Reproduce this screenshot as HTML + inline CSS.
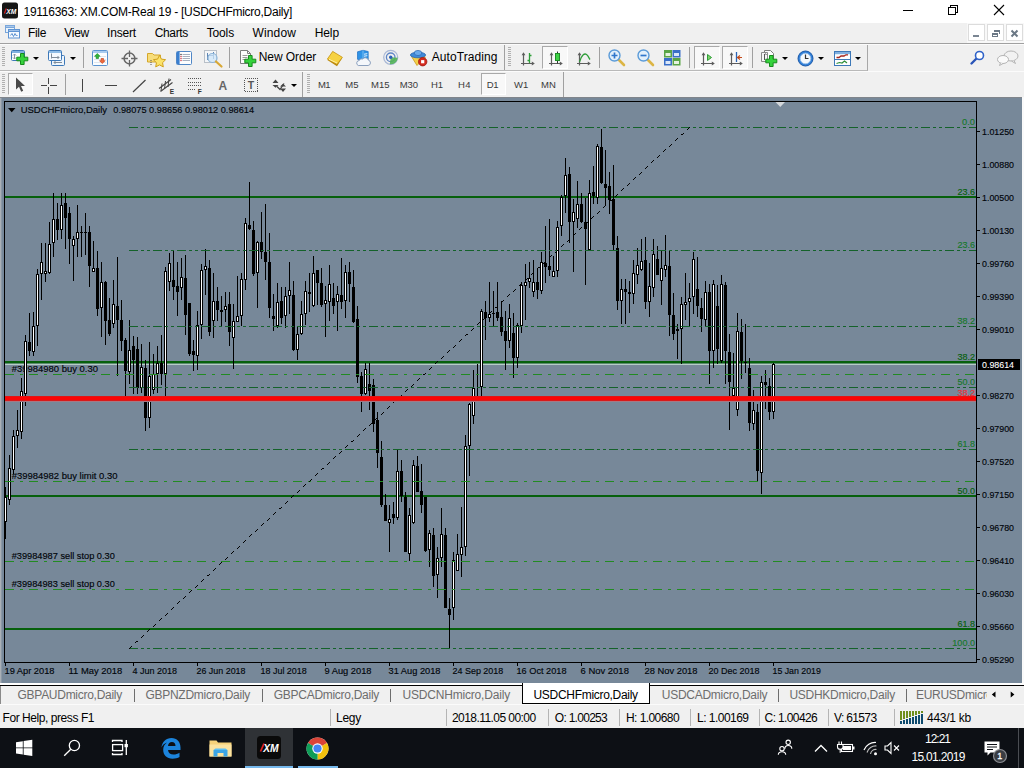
<!DOCTYPE html>
<html lang="en"><head><meta charset="utf-8"><title>19116363: XM.COM-Real 19 - [USDCHFmicro,Daily]</title>
<style>
html,body{margin:0;padding:0}
body{width:1024px;height:768px;overflow:hidden;position:relative;background:#f0f0f0;font-family:"Liberation Sans",sans-serif}
.t{position:absolute;white-space:pre;line-height:20px;height:20px;font-family:"Liberation Sans",sans-serif}
.abs{position:absolute}
#titlebar{position:absolute;left:0;top:0;width:1024px;height:23px;background:#fff}
#menubar{position:absolute;left:0;top:23px;width:1024px;height:20px;background:#f0f0f0;border-bottom:1px solid #a0a0a0}
#tb1{position:absolute;left:0;top:44px;width:1024px;height:27px}
#tb2{position:absolute;left:0;top:71px;width:1024px;height:26px}
.sep{position:absolute;width:1px;background:#a0a0a0}
.grip{position:absolute;width:3px;height:20px;background:repeating-linear-gradient(to bottom,#b0b0b0 0,#b0b0b0 1px,transparent 1px,transparent 2px)}
.pressed{position:absolute;background:#f8f8f8;border:1px solid #fff;border-top-color:#a9a9a9;border-left-color:#a9a9a9;box-sizing:border-box}
.dd{position:absolute;width:0;height:0;border-left:3px solid transparent;border-right:3px solid transparent;border-top:3px solid #000}
#mdi{position:absolute;left:0;top:97px;width:1024px;height:586px;background:#778899;overflow:hidden}
#tabs{position:absolute;left:0;top:683px;width:1024px;height:22px;background:#f0f0f0}
#status{position:absolute;left:0;top:705px;width:1024px;height:23px;background:#f0f0f0}
#taskbar{position:absolute;left:0;top:728px;width:1024px;height:40px;background:#0d1015}
svg{position:absolute;display:block;overflow:visible}
svg text{font-family:"Liberation Sans",sans-serif}
</style></head><body>
<div id="titlebar"><svg style="left:2px;top:2px" width="16" height="17" viewBox="0 0 16 17"><rect x="0" y="0.5" width="16" height="16" rx="2.5" fill="#161616"/><path d="M2.400 11.500L4.300 6.500" stroke="#d42020" stroke-width="1.200"/><text x="4.200" y="11.600" font-size="6.800" font-weight="bold" font-style="italic" fill="#fff" textLength="10" lengthAdjust="spacingAndGlyphs">XM</text></svg><span class="t" style="left:23.5px;top:2px;font-size:12px;color:#000;letter-spacing:-0.261px;">19116363: XM.COM-Real 19 - [USDCHFmicro,Daily]</span><svg style="left:896px;top:0" width="128" height="23" viewBox="0 0 128 23" shape-rendering="crispEdges"><path d="M7 10.5 H17" stroke="#000" stroke-width="1"/><path d="M52.5 7.5 H59.5 V14.5 H52.5 Z M54.5 7.5 V5.5 H61.5 V12.5 H59.5" stroke="#000" fill="none"/><path d="M98 5 L108 15 M108 5 L98 15" stroke="#000" stroke-width="1.1" shape-rendering="geometricPrecision"/></svg></div><div id="menubar"></div><svg style="left:5px;top:25px" width="16" height="14" viewBox="0 0 16 14"><rect x="0.500" y="0.500" width="9" height="7" fill="#eaf3fc" stroke="#7aa6da"/><rect x="0.500" y="0.500" width="9" height="2" fill="#a8c8ec" stroke="#7aa6da"/><rect x="3.500" y="4.500" width="11" height="8.500" fill="#f4f9ff" stroke="#5e93d2"/><rect x="3.500" y="4.500" width="11" height="2" fill="#9cc0ea" stroke="#5e93d2"/><path d="M5.500 10.500l1.500-2 1.500 3 1.500-3 1.500 2.500 1-1" stroke="#4a86cc" fill="none" stroke-width=".9"/></svg><span class="t" style="left:28px;top:23px;font-size:12px;color:#000;letter-spacing:-0.336px;">File</span><span class="t" style="left:64.3px;top:23px;font-size:12px;color:#000;letter-spacing:-0.274px;">View</span><span class="t" style="left:107px;top:23px;font-size:12px;color:#000;letter-spacing:-0.167px;">Insert</span><span class="t" style="left:154.7px;top:23px;font-size:12px;color:#000;letter-spacing:-0.341px;">Charts</span><span class="t" style="left:206.7px;top:23px;font-size:12px;color:#000;letter-spacing:-0.143px;">Tools</span><span class="t" style="left:252.5px;top:23px;font-size:12px;color:#000;letter-spacing:0.135px;">Window</span><span class="t" style="left:314.7px;top:23px;font-size:12px;color:#000;letter-spacing:-0.097px;">Help</span><div class="abs" style="left:967px;top:23px;width:57px;height:20px;background:#f8f8f8"></div><div class="abs" style="left:968px;top:24px;width:17px;height:17px;background:#fff;border:1px solid #dcdcdc;box-sizing:border-box"></div><div class="abs" style="left:987px;top:24px;width:17px;height:17px;background:#fff;border:1px solid #dcdcdc;box-sizing:border-box"></div><div class="abs" style="left:1006px;top:24px;width:17px;height:17px;background:#fff;border:1px solid #dcdcdc;box-sizing:border-box"></div><svg style="left:968px;top:24px" width="56" height="18" viewBox="0 0 56 18" shape-rendering="crispEdges"><rect x="5" y="11" width="6" height="2" fill="#7a8592"/><path d="M26.5 6.5 H31.5 V9.5 M24.5 9.5 H29.5 V12.5 H24.5 Z" stroke="#6b7885" fill="none" stroke-width="1"/><rect x="26" y="6" width="6" height="2" fill="#6b7885"/><rect x="24" y="9" width="6" height="2" fill="#6b7885"/><path d="M43.5 6.5 L49.5 12.5 M49.5 6.5 L43.5 12.5" stroke="#6b7885" stroke-width="2" shape-rendering="geometricPrecision"/></svg><div class="abs" style="left:0;top:44px;width:867px;height:26px;border-bottom:1px solid #b9b9b9;border-right:1px solid #a8a8a8;box-sizing:content-box"></div><div class="abs" style="left:0;top:44px;width:1024px;height:1px;background:#fbfbfb"></div><div class="abs" style="left:0;top:71px;width:1024px;height:1px;background:#fbfbfb"></div><div class="grip" style="left:2px;top:47px"></div><div class="grip" style="left:508px;top:47px"></div><div class="grip" style="left:2px;top:74px"></div><div class="grip" style="left:307px;top:74px"></div><svg style="left:11px;top:50px" width="18" height="16" viewBox="0 0 18 16" ><rect x="0.5" y="0.5" width="13" height="10" rx="1" fill="#fdfeff" stroke="#3d78b8"/><rect x="1" y="1" width="12" height="2" fill="#7fb0e0"/><path d="M3.5 4v5M2 5.5l1.5-1.5 1.5 1.5M2 7.5l1.5 1.5 1.5-1.5" stroke="#8a96a3" fill="none" stroke-width="1"/><path d="M9.5 3.5h3.600v3.700h3.700v3.600h-3.700v3.700h-3.600v-3.700h-3.700v-3.600h3.700z" fill="#35d23c" stroke="#168a1c" stroke-width="1"/></svg><div class="dd" style="left:33px;top:57px"></div><svg style="left:48px;top:50px" width="18" height="16" viewBox="0 0 18 16" ><rect x="3.5" y="5.5" width="13" height="10" rx="1" fill="#eef5fc" stroke="#3d78b8"/><rect x="0.5" y="0.5" width="13" height="10" rx="1" fill="#f4f9ff" stroke="#3d78b8"/><rect x="1" y="1" width="12" height="2" fill="#8dbbe6"/><path d="M3.5 3.5v5M3 7.5h8M9.5 6l1.5 1.5-1.5 1.5M6 12.5h8M7.5 11l-1.5 1.5 1.5 1.5" stroke="#7f8c9a" fill="none"/></svg><div class="dd" style="left:70px;top:57px"></div><div class="sep" style="left:83px;top:47px;height:21px"></div><svg style="left:92px;top:50px" width="17" height="16" viewBox="0 0 17 16" ><rect x="0.5" y="0.5" width="15" height="15" rx="1" fill="#fbfdff" stroke="#5b93d0"/><rect x="1" y="1" width="14" height="2" fill="#a9cbee"/><path d="M2 6.5h12M2 9.5h12M2 12.5h12" stroke="#dfe6ee"/><path d="M5.3 3.5l2.800 2.800h-1.600v2.200h-2.400v-2.200h-1.600z" fill="#2fb53a" stroke="#178a22" stroke-width=".6"/><path d="M10.300 13.500l-2.800-2.800h1.600v-2.200h2.400v2.200h1.600z" fill="#f06a3c" stroke="#c23a12" stroke-width=".6"/></svg><svg style="left:121px;top:50px" width="17" height="17" viewBox="0 0 17 17" ><circle cx="8.5" cy="8.5" r="5.400" fill="none" stroke="#666" stroke-width="1.5"/><path d="M8.5 0.5v6.500M8.5 10v6.500M0.5 8.5h6.500M10 8.5h6.500" stroke="#666" stroke-width="1.300"/></svg><svg style="left:147px;top:50px" width="20" height="17" viewBox="0 0 20 17" ><path d="M0.5 3.5h5l1.5 1.5h6.5v7h-13z" fill="#f7dd7a" stroke="#d4a72c"/><path d="M4 10v6" stroke="#555" stroke-dasharray="1 1"/><path d="M12.5 5.2l1.9 3.9 4.2.6-3.05 3 .75 4.2-3.8-2-3.8 2 .75-4.2-3.05-3 4.2-.6z" fill="#fbe36a" stroke="#d1a11e" stroke-width="1"/></svg><svg style="left:176px;top:50px" width="17" height="16" viewBox="0 0 17 16" ><rect x="0.5" y="1.5" width="15" height="13" rx="1" fill="#fdfeff" stroke="#4f86c6"/><rect x="1" y="2" width="2.600" height="12" fill="#3a7fd0"/><path d="M6.5 4.5h7.500M6.5 6.5h7.500M6.5 8.5h7.500M6.5 10.500h7.500" stroke="#8f9cae" stroke-width=".8"/><circle cx="5" cy="4.5" r=".7" fill="#222"/><circle cx="5" cy="6.5" r=".7" fill="#c23"/><circle cx="5" cy="8.5" r=".7" fill="#c23"/><circle cx="5" cy="10.500" r=".7" fill="#c23"/></svg><svg style="left:204px;top:50px" width="19" height="18" viewBox="0 0 19 18" ><rect x="0.5" y="0.5" width="12" height="12" fill="#f4f6f8" stroke="#b9c0c8"/><path d="M3.5 3v7M9.5 2v7M3.5 5.5h6" stroke="#5f86b3"/><circle cx="8.5" cy="8" r="4.5" fill="#cfe6fa" fill-opacity=".75" stroke="#8db4d8" stroke-width="1.2"/><path d="M12 11.5l5.5 5" stroke="#d9a835" stroke-width="2.2" stroke-linecap="round"/></svg><div class="sep" style="left:229px;top:47px;height:21px"></div><svg style="left:239px;top:50px" width="18" height="18" viewBox="0 0 18 18" ><path d="M1.5 0.5h7l3 3v10h-10z" fill="#fcfcfc" stroke="#7d7d7d"/><path d="M8.5 0.5v3h3" fill="none" stroke="#7d7d7d"/><path d="M3.5 5.5h5M3.5 7.5h5M3.5 9.5h3" stroke="#9a9a9a"/><path d="M9.5 5.5h3.600v3.700h3.700v3.600h-3.700v3.700h-3.600v-3.700h-3.700v-3.600h3.700z" fill="#35d23c" stroke="#168a1c" stroke-width="1"/></svg><span class="t" style="left:258.7px;top:47px;font-size:12px;color:#000;letter-spacing:-0.057px;">New Order</span><svg style="left:326px;top:50px" width="18" height="17" viewBox="0 0 18 17" ><path d="M1.400 10L6.700 1.400L16.400 7.800L11 16.300z" fill="#b8860b"/><path d="M1.400 9L6.700 1.400L16.400 7.300L11 14.300z" fill="#f6d242" stroke="#c9981a" stroke-width=".8"/><path d="M3 9.300L11 13" stroke="#fff0a8" stroke-width="1"/></svg><svg style="left:355px;top:50px" width="17" height="17" viewBox="0 0 17 17" ><path d="M2.500 1.800L8 0.300l5.200 1.200v8L8 10.500l-5.500-1.200z" fill="#2f93e6" stroke="#1c6fc4" stroke-width=".7"/><path d="M8 0.300v10" stroke="#8ac6f5" stroke-width=".8"/><path d="M9 4.200l3.300-.5M9 6.200l3.300-.5" stroke="#e8f4ff" stroke-width="1"/><path d="M3.300 15.500h9.800a2.700 2.700 0 0 0 .3-5.300a3.300 3.300 0 0 0-5.800-1.200a2.500 2.500 0 0 0-3.300 1.500a2.600 2.600 0 0 0-1 5z" fill="#f4f7fb" stroke="#7f96b8" stroke-width=".9"/></svg><svg style="left:383px;top:50px" width="17" height="17" viewBox="0 0 17 17" ><circle cx="7.700" cy="7.300" r="7" fill="none" stroke="#aab9d6" stroke-width="1.300"/><circle cx="7.700" cy="7.300" r="4.300" fill="none" stroke="#5f86c6" stroke-width="1.300"/><path d="M7.700 7.300L14.700 7.800A7 7 0 0 1 6.800 14.300z" fill="#52b257" fill-opacity=".9"/><circle cx="7.700" cy="7.300" r="1.700" fill="#2b62b6"/></svg><svg style="left:410px;top:49px" width="18" height="18" viewBox="0 0 18 18" ><path d="M1.500 7.500L7 16.500L15.500 8z" fill="#f4d04a" stroke="#c9981a" stroke-width=".8"/><ellipse cx="8" cy="6" rx="7.600" ry="2.800" fill="#3f8ad8" stroke="#2a66b0" stroke-width=".8"/><ellipse cx="8" cy="4" rx="3.800" ry="2.600" fill="#6aa9ea" stroke="#2a66b0" stroke-width=".7"/><circle cx="12.700" cy="12.700" r="4.200" fill="#d42a1e" stroke="#9c1610" stroke-width=".8"/><rect x="11.100" y="11.100" width="3.200" height="3.200" fill="#fff"/></svg><span class="t" style="left:431.7px;top:47px;font-size:12px;color:#000;letter-spacing:0.080px;">AutoTrading</span><div class="sep" style="left:504px;top:45px;height:25px"></div><svg style="left:520px;top:51px" width="16" height="16" viewBox="0 0 16 16" ><path d="M3.500 2.500v12M1 12.500h12.500" stroke="#5c5c5c" stroke-width="1.200" fill="none"/><path d="M1.600 4.200l1.900-3 1.900 3zM11.800 10.600l3 1.900-3 1.900z" fill="#5c5c5c"/><path d="M9.500 2v10M7.500 9.500h2M9.500 4.500h2" stroke="#2e9e38" stroke-width="1.300" fill="none"/></svg><div class="pressed" style="left:542px;top:46px;width:26px;height:23px"></div><svg style="left:548px;top:51px" width="16" height="16" viewBox="0 0 16 16" ><path d="M3.500 2.500v12M1 12.500h12.500" stroke="#5c5c5c" stroke-width="1.200" fill="none"/><path d="M1.600 4.200l1.900-3 1.900 3zM11.800 10.600l3 1.900-3 1.900z" fill="#5c5c5c"/><path d="M9.500 0.500v12" stroke="#333"/><rect x="7.500" y="2.500" width="4" height="7" fill="#3fd246" stroke="#1f8f28"/></svg><svg style="left:576px;top:51px" width="16" height="16" viewBox="0 0 16 16" ><path d="M3.500 2.500v12M1 12.500h12.500" stroke="#5c5c5c" stroke-width="1.200" fill="none"/><path d="M1.600 4.200l1.900-3 1.900 3zM11.800 10.600l3 1.900-3 1.900z" fill="#5c5c5c"/><path d="M3.500 11c2-7 5-9 7-7.500s2 3 3.500 5" stroke="#2e9e38" stroke-width="1.300" fill="none"/></svg><div class="sep" style="left:599px;top:47px;height:21px"></div><svg style="left:608px;top:49px" width="18" height="18" viewBox="0 0 18 18" ><path d="M10.500 10.500l5.500 5.500" stroke="#dcb545" stroke-width="2.600" stroke-linecap="round"/><circle cx="6.500" cy="6.500" r="5.500" fill="#e2f0fb" stroke="#5b9bd8" stroke-width="1.400"/><path d="M3.500 6.500h6M6.500 3.500v6" stroke="#2f77cc" stroke-width="1.700"/></svg><svg style="left:637px;top:49px" width="18" height="18" viewBox="0 0 18 18" ><path d="M10.500 10.500l5.500 5.500" stroke="#dcb545" stroke-width="2.600" stroke-linecap="round"/><circle cx="6.500" cy="6.500" r="5.500" fill="#e2f0fb" stroke="#5b9bd8" stroke-width="1.400"/><path d="M3.500 6.500h6" stroke="#2f77cc" stroke-width="1.700"/></svg><svg style="left:664px;top:50px" width="17" height="16" viewBox="0 0 17 16" ><rect x="0" y="0" width="8" height="7.500" fill="#5aa546"/><rect x="8.500" y="0" width="8" height="7.500" fill="#3a6fc8"/><rect x="0" y="8" width="8" height="7.500" fill="#3a6fc8"/><rect x="8.500" y="8" width="8" height="7.500" fill="#5aa546"/><rect x="1.500" y="3" width="5" height="3" fill="#e6f2df"/><rect x="10" y="3" width="5" height="3" fill="#dbe7f8"/><rect x="1.500" y="11" width="5" height="3" fill="#dbe7f8"/><rect x="10" y="11" width="5" height="3" fill="#e6f2df"/></svg><div class="sep" style="left:689px;top:47px;height:21px"></div><div class="pressed" style="left:694px;top:46px;width:26px;height:23px"></div><svg style="left:700px;top:51px" width="16" height="16" viewBox="0 0 16 16" ><path d="M3.500 2.500v12M1 12.500h12.500" stroke="#5c5c5c" stroke-width="1.200" fill="none"/><path d="M1.600 4.200l1.900-3 1.900 3zM11.800 10.600l3 1.900-3 1.900z" fill="#5c5c5c"/><path d="M7.500 3.500l4 3-4 3z" fill="#7fd36a" stroke="#2e9e38"/></svg><div class="pressed" style="left:722px;top:46px;width:26px;height:23px"></div><svg style="left:728px;top:51px" width="16" height="16" viewBox="0 0 16 16" ><path d="M3.500 2.500v12M1 12.500h12.500" stroke="#5c5c5c" stroke-width="1.200" fill="none"/><path d="M1.600 4.200l1.900-3 1.900 3zM11.800 10.600l3 1.900-3 1.900z" fill="#5c5c5c"/><path d="M8.500 1v10" stroke="#2a63b5" stroke-width="1.300"/><path d="M14 6.500h-4M12 4.500l-2.500 2 2.500 2" stroke="#c24a1a" fill="none" stroke-width="1.200"/></svg><div class="sep" style="left:752px;top:47px;height:21px"></div><svg style="left:761px;top:50px" width="18" height="18" viewBox="0 0 18 18" ><path d="M3.500 0.500h6l3 3v8h-9z" fill="#fcfcfc" stroke="#7d7d7d"/><path d="M0.500 2.500h6v9h-6z" fill="#f6f6f6" stroke="#8a8a8a"/><path d="M3 5c1.500-2 2-1 2.500 0" stroke="#555" fill="none"/><path d="M3.500 4v6" stroke="#555"/><path d="M8.5 5.5h3.600v3.700h3.700v3.600h-3.700v3.700h-3.600v-3.700h-3.700v-3.600h3.700z" fill="#35d23c" stroke="#168a1c" stroke-width="1"/></svg><div class="dd" style="left:782px;top:57px"></div><svg style="left:797px;top:50px" width="17" height="17" viewBox="0 0 17 17" ><circle cx="8.500" cy="8.500" r="7.500" fill="#2f7fd8" stroke="#1b58a8"/><circle cx="8.500" cy="8.500" r="5.300" fill="#f4f8fc" stroke="#9cc0ea" stroke-width=".8"/><path d="M8.500 4.500v4h3" stroke="#333" fill="none" stroke-width="1.200"/></svg><div class="dd" style="left:818px;top:57px"></div><svg style="left:834px;top:51px" width="17" height="15" viewBox="0 0 17 15" ><rect x="0.500" y="0.500" width="16" height="14" fill="#fdfeff" stroke="#3d78b8"/><rect x="1" y="1" width="15" height="2.200" fill="#7fb0e0"/><path d="M1 8.500h15" stroke="#3d78b8"/><path d="M2.500 6.500h2.500l2-1.500h3l2-1.200h2" stroke="#a5251b" fill="none" stroke-width="1.300"/><path d="M2.500 12.500l3-1 2.500.5 2.500-2 2.500 2" stroke="#2e8e38" fill="none" stroke-width="1.200"/></svg><div class="dd" style="left:855px;top:57px"></div><svg style="left:970px;top:50px" width="15" height="15" viewBox="0 0 15 15" ><path d="M1.500 13.500l4.500-4.500" stroke="#2a55b8" stroke-width="2.400" stroke-linecap="round"/><circle cx="9.500" cy="5.500" r="4" fill="#fff" stroke="#2f62c8" stroke-width="1.600"/></svg><svg style="left:997px;top:50px" width="22" height="16" viewBox="0 0 22 16" ><ellipse cx="14" cy="6" rx="7" ry="5" fill="#f2f2f2" stroke="#b4b4b4"/><path d="M17 10.500l1.500 3-4-2.500" fill="#f2f2f2" stroke="#b4b4b4"/><ellipse cx="6" cy="9.500" rx="5.500" ry="4" fill="#fafafa" stroke="#b4b4b4"/><path d="M3.500 12.800l-1 2.700 3.500-2" fill="#fafafa" stroke="#b4b4b4"/></svg><div class="pressed" style="left:8px;top:73px;width:25px;height:22px"></div><svg style="left:15px;top:77px" width="11" height="16" viewBox="0 0 11 16" ><path d="M1 0.500v12l3-2.800 2.200 5 2-1-2.200-4.700h4z" fill="#4a4a4a"/></svg><svg style="left:41px;top:78px" width="16" height="16" viewBox="0 0 16 16" shape-rendering="crispEdges"><path d="M7.500 0v6M7.500 9v6.500M0 7.500h6M9 7.500h6.500" stroke="#444" stroke-width="1.200"/></svg><div class="sep" style="left:65px;top:74px;height:21px"></div><div class="abs" style="left:82px;top:79px;width:1px;height:13px;background:#444"></div><div class="abs" style="left:105px;top:85px;width:12px;height:1px;background:#444"></div><svg style="left:132px;top:79px" width="14" height="14" viewBox="0 0 14 14" ><path d="M1 13L13.500 1" stroke="#444" stroke-width="1.200"/></svg><svg style="left:158px;top:77px" width="17" height="17" viewBox="0 0 17 17" ><path d="M1 11.500L13 2.500M2.500 14.500L14.500 5.500" stroke="#444" stroke-width="1.100"/><path d="M4 6.500L3 14M7.500 4L6.500 12M11 1.500L10 10" stroke="#444" stroke-width="1"/><text x="11.800" y="16.600" font-size="6.500" font-weight="bold" fill="#333">E</text></svg><svg style="left:188px;top:77px" width="15" height="17" viewBox="0 0 15 17" shape-rendering="crispEdges"><path d="M0 1.500h13M0 5.500h13M0 8.500h13M0 12.500h8" stroke="#555" stroke-dasharray="1 1"/><text x="9.800" y="16.800" font-size="6.500" font-weight="bold" fill="#333" shape-rendering="geometricPrecision">F</text></svg><span class="t" style="left:218.500px;top:76px;font-size:12px;font-weight:bold;color:#666">A</span><svg style="left:244px;top:78px" width="14" height="14" viewBox="0 0 14 14" shape-rendering="crispEdges"><rect x="0.500" y="0.500" width="13" height="13" fill="none" stroke="#555" stroke-dasharray="1 1"/><text x="7" y="11.300" font-size="10.500" font-weight="bold" fill="#555" text-anchor="middle">T</text></svg><svg style="left:272px;top:79px" width="15" height="14" viewBox="0 0 15 14" ><path d="M3.500 0.500l3 3.500h-6zM11 13l3-3.500h-6z" fill="#444"/><path d="M0.500 6h6l-3 2.800zM8 7.500h6l-3-2.800z" fill="#444"/><path d="M5 7.500l3 3 4-6" stroke="#444" fill="none" stroke-width="1.300"/></svg><div class="dd" style="left:291px;top:84px"></div><div class="sep" style="left:302px;top:72px;height:25px"></div><span class="t" style="left:318px;top:75.3px;font-size:9.5px;color:#3a3a3a;letter-spacing:-0.594px;">M1</span><span class="t" style="left:345.3px;top:75.3px;font-size:9.5px;color:#3a3a3a;letter-spacing:0.006px;">M5</span><span class="t" style="left:371px;top:75.3px;font-size:9.5px;color:#3a3a3a;letter-spacing:0.010px;">M15</span><span class="t" style="left:399.7px;top:75.3px;font-size:9.5px;color:#3a3a3a;letter-spacing:-0.056px;">M30</span><span class="t" style="left:431px;top:75.3px;font-size:9.5px;color:#3a3a3a;letter-spacing:-0.070px;">H1</span><span class="t" style="left:458px;top:75.3px;font-size:9.5px;color:#3a3a3a;letter-spacing:0.430px;">H4</span><div class="pressed" style="left:481px;top:73px;width:25px;height:22px"></div><span class="t" style="left:486.7px;top:75.3px;font-size:9.5px;color:#3a3a3a;letter-spacing:-0.420px;">D1</span><span class="t" style="left:514px;top:75.3px;font-size:9.5px;color:#3a3a3a;letter-spacing:0.125px;">W1</span><span class="t" style="left:541px;top:75.3px;font-size:9.5px;color:#3a3a3a;letter-spacing:0.117px;">MN</span><div class="sep" style="left:563px;top:72px;height:25px"></div><div id="mdi"><svg style="left:0;top:0" width="1024" height="587" viewBox="0 97 1024 587" shape-rendering="crispEdges"><rect x="0" y="97" width="1024" height="1" fill="#80858b"/><rect x="0" y="98" width="1" height="586" fill="#aab0b6"/><rect x="1" y="98" width="1" height="586" fill="#8c99a6"/><rect x="1022" y="97" width="2" height="587" fill="#fafafa"/><clipPath id="cc"><rect x="5" y="102" width="971" height="560"/></clipPath><g clip-path="url(#cc)"><rect x="5" y="196" width="971" height="2" fill="#06600c"/><rect x="5" y="361" width="971" height="2" fill="#06600c"/><rect x="5" y="495" width="971" height="2" fill="#06600c"/><rect x="5" y="628" width="971" height="2" fill="#06600c"/><rect x="5" y="363" width="971" height="1" fill="#5a8a6c"/><rect x="5" y="364" width="971" height="1" fill="#b6ccc6"/><g shape-rendering="geometricPrecision" stroke-width="0.150"><text x="11.7" y="371.8" font-size="9.5" fill="#000409" stroke="#000409" text-anchor="start" textLength="86.3" lengthAdjust="spacingAndGlyphs">#39984980 buy 0.30</text><text x="11.7" y="478.8" font-size="9.5" fill="#000409" stroke="#000409" text-anchor="start" textLength="105.8" lengthAdjust="spacingAndGlyphs">#39984982 buy limit 0.30</text><text x="11.7" y="559" font-size="9.5" fill="#000409" stroke="#000409" text-anchor="start" textLength="103.1" lengthAdjust="spacingAndGlyphs">#39984987 sell stop 0.30</text><text x="11.7" y="587.2" font-size="9.5" fill="#000409" stroke="#000409" text-anchor="start" textLength="103.1" lengthAdjust="spacingAndGlyphs">#39984983 sell stop 0.30</text></g><path d="M5 487h1v52h-1zM4 497h3v25h-3zM9 455h1v50h-1zM8 468h3v32h-3zM13 430h1v44h-1zM12 436h3v34h-3zM17 410h1v38h-1zM16 430h3v6h-3zM21 378h1v61h-1zM20 391h3v41h-3zM25 335h1v71h-1zM24 341h3v53h-3zM29 313h1v43h-1zM28 342h3v9h-3zM33 312h1v44h-1zM32 326h3v26h-3zM37 269h1v77h-1zM36 274h3v52h-3zM41 243h1v57h-1zM40 262h3v12h-3zM45 243h1v39h-1zM44 271h3v3h-3zM49 222h1v52h-1zM48 244h3v29h-3zM53 193h1v64h-1zM52 219h3v24h-3zM57 203h1v37h-1zM56 219h3v11h-3zM61 193h1v46h-1zM60 205h3v25h-3zM65 193h1v56h-1zM64 203h3v15h-3zM69 207h1v57h-1zM68 213h3v26h-3zM73 236h1v45h-1zM72 239h3v7h-3zM77 205h1v52h-1zM76 232h3v7h-3zM81 226h1v31h-1zM80 232h3v1h-3zM85 213h1v42h-1zM84 232h3v1h-3zM89 226h1v61h-1zM88 232h3v34h-3zM93 241h1v31h-1zM92 268h3v4h-3zM97 251h1v65h-1zM96 268h3v41h-3zM101 262h1v75h-1zM100 282h3v26h-3zM105 281h1v64h-1zM104 282h3v39h-3zM109 298h1v38h-1zM108 320h3v14h-3zM113 280h1v48h-1zM112 304h3v20h-3zM117 257h1v119h-1zM116 306h3v14h-3zM121 300h1v51h-1zM120 320h3v21h-3zM125 338h1v59h-1zM124 340h3v31h-3zM129 320h1v64h-1zM128 350h3v22h-3zM133 336h1v58h-1zM132 346h3v14h-3zM137 337h1v57h-1zM136 349h3v39h-3zM141 344h1v49h-1zM140 367h3v21h-3zM145 360h1v71h-1zM144 368h3v50h-3zM149 342h1v86h-1zM148 376h3v42h-3zM153 354h1v40h-1zM152 374h3v16h-3zM157 346h1v47h-1zM156 363h3v11h-3zM161 335h1v50h-1zM160 363h3v11h-3zM165 267h1v129h-1zM164 271h3v103h-3zM169 253h1v38h-1zM168 263h3v19h-3zM173 251h1v49h-1zM172 280h3v7h-3zM177 262h1v54h-1zM176 286h3v6h-3zM181 258h1v42h-1zM180 277h3v11h-3zM185 255h1v80h-1zM184 278h3v37h-3zM189 303h1v53h-1zM188 303h3v51h-3zM193 340h1v31h-1zM192 351h3v4h-3zM197 311h1v59h-1zM196 325h3v31h-3zM201 264h1v75h-1zM200 270h3v55h-3zM205 249h1v46h-1zM204 266h3v4h-3zM209 260h1v76h-1zM208 268h3v64h-3zM213 273h1v65h-1zM212 301h3v20h-3zM217 287h1v34h-1zM216 301h3v9h-3zM221 296h1v30h-1zM220 310h3v2h-3zM225 292h1v30h-1zM224 306h3v4h-3zM229 292h1v54h-1zM228 304h3v28h-3zM233 304h1v65h-1zM232 321h3v17h-3zM237 276h1v46h-1zM236 316h3v6h-3zM241 273h1v53h-1zM240 279h3v37h-3zM245 218h1v72h-1zM244 223h3v57h-3zM249 182h1v48h-1zM248 225h3v4h-3zM253 221h1v55h-1zM252 230h3v44h-3zM257 241h1v67h-1zM256 242h3v31h-3zM261 212h1v47h-1zM260 242h3v10h-3zM265 204h1v76h-1zM264 252h3v10h-3zM269 233h1v85h-1zM268 262h3v46h-3zM273 294h1v37h-1zM272 316h3v3h-3zM277 283h1v45h-1zM276 302h3v24h-3zM281 287h1v37h-1zM280 301h3v17h-3zM285 287h1v41h-1zM284 296h3v20h-3zM289 262h1v52h-1zM288 290h3v6h-3zM293 281h1v70h-1zM292 295h3v55h-3zM297 326h1v34h-1zM296 334h3v16h-3zM301 301h1v34h-1zM300 314h3v20h-3zM305 281h1v44h-1zM304 291h3v23h-3zM309 273h1v39h-1zM308 292h3v2h-3zM313 256h1v51h-1zM312 273h3v33h-3zM317 270h1v35h-1zM316 270h3v13h-3zM321 268h1v39h-1zM320 283h3v22h-3zM325 286h1v51h-1zM324 300h3v4h-3zM329 265h1v56h-1zM328 284h3v18h-3zM333 283h1v31h-1zM332 298h3v8h-3zM337 286h1v45h-1zM336 294h3v8h-3zM341 258h1v51h-1zM340 295h3v7h-3zM345 265h1v53h-1zM344 272h3v29h-3zM349 262h1v40h-1zM348 272h3v12h-3zM353 270h1v53h-1zM352 287h3v35h-3zM357 306h1v77h-1zM356 319h3v58h-3zM361 372h1v40h-1zM360 376h3v18h-3zM365 363h1v32h-1zM364 369h3v25h-3zM369 363h1v47h-1zM368 384h3v7h-3zM373 379h1v53h-1zM372 385h3v39h-3zM377 412h1v56h-1zM376 420h3v33h-3zM381 441h1v66h-1zM380 457h3v48h-3zM385 494h1v27h-1zM384 505h3v16h-3zM389 505h1v47h-1zM388 519h3v4h-3zM393 502h1v22h-1zM392 514h3v4h-3zM397 450h1v70h-1zM396 471h3v47h-3zM401 460h1v42h-1zM400 471h3v25h-3zM405 492h1v60h-1zM404 497h3v55h-3zM409 508h1v53h-1zM408 515h3v39h-3zM413 460h1v64h-1zM412 465h3v58h-3zM417 456h1v36h-1zM416 466h3v26h-3zM421 464h1v49h-1zM420 491h3v14h-3zM425 497h1v55h-1zM424 497h3v54h-3zM429 530h1v37h-1zM428 533h3v17h-3zM433 528h1v59h-1zM432 535h3v41h-3zM437 547h1v51h-1zM436 558h3v17h-3zM441 508h1v59h-1zM440 534h3v24h-3zM445 528h1v80h-1zM444 535h3v73h-3zM449 598h1v50h-1zM448 609h3v6h-3zM453 552h1v68h-1zM452 560h3v48h-3zM457 534h1v37h-1zM456 554h3v17h-3zM461 507h1v70h-1zM460 547h3v8h-3zM465 435h1v121h-1zM464 446h3v101h-3zM469 403h1v73h-1zM468 404h3v42h-3zM473 370h1v54h-1zM472 388h3v28h-3zM477 364h1v34h-1zM476 397h3v1h-3zM481 309h1v88h-1zM480 311h3v76h-3zM485 301h1v39h-1zM484 312h3v6h-3zM489 282h1v40h-1zM488 314h3v4h-3zM493 291h1v35h-1zM492 313h3v1h-3zM497 282h1v39h-1zM496 312h3v6h-3zM501 301h1v35h-1zM500 317h3v15h-3zM505 311h1v59h-1zM504 331h3v10h-3zM509 304h1v44h-1zM508 318h3v23h-3zM513 313h1v65h-1zM512 333h3v25h-3zM517 323h1v45h-1zM516 325h3v33h-3zM521 282h1v51h-1zM520 285h3v41h-3zM525 264h1v56h-1zM524 282h3v4h-3zM529 262h1v26h-1zM528 278h3v4h-3zM533 260h1v37h-1zM532 282h3v10h-3zM537 268h1v31h-1zM536 282h3v8h-3zM541 252h1v42h-1zM540 262h3v29h-3zM545 226h1v57h-1zM544 263h3v4h-3zM549 219h1v57h-1zM548 266h3v4h-3zM553 256h1v21h-1zM552 271h3v6h-3zM557 221h1v56h-1zM556 227h3v44h-3zM561 195h1v41h-1zM560 197h3v29h-3zM565 158h1v55h-1zM564 175h3v21h-3zM569 167h1v76h-1zM568 174h3v48h-3zM573 199h1v73h-1zM572 212h3v10h-3zM577 181h1v47h-1zM576 204h3v15h-3zM581 193h1v30h-1zM580 204h3v18h-3zM585 198h1v87h-1zM584 222h3v7h-3zM589 180h1v70h-1zM588 193h3v57h-3zM593 166h1v38h-1zM592 192h3v4h-3zM597 144h1v60h-1zM596 146h3v52h-3zM601 129h1v55h-1zM600 147h3v36h-3zM605 150h1v56h-1zM604 184h3v4h-3zM609 172h1v42h-1zM608 186h3v14h-3zM613 165h1v85h-1zM612 199h3v46h-3zM617 236h1v74h-1zM616 248h3v53h-3zM621 279h1v45h-1zM620 289h3v12h-3zM625 279h1v45h-1zM624 289h3v3h-3zM629 281h1v32h-1zM628 292h3v2h-3zM633 260h1v44h-1zM632 273h3v21h-3zM637 248h1v36h-1zM636 265h3v10h-3zM641 239h1v32h-1zM640 261h3v9h-3zM645 237h1v72h-1zM644 260h3v42h-3zM649 263h1v54h-1zM648 286h3v16h-3zM653 239h1v58h-1zM652 254h3v34h-3zM657 246h1v29h-1zM656 259h3v16h-3zM661 251h1v54h-1zM660 268h3v13h-3zM665 235h1v42h-1zM664 265h3v5h-3zM669 251h1v85h-1zM668 266h3v49h-3zM673 293h1v47h-1zM672 315h3v19h-3zM677 324h1v35h-1zM676 329h3v2h-3zM681 297h1v67h-1zM680 304h3v25h-3zM685 273h1v47h-1zM684 302h3v3h-3zM689 283h1v43h-1zM688 298h3v4h-3zM693 252h1v62h-1zM692 259h3v38h-3zM697 257h1v60h-1zM696 289h3v17h-3zM701 298h1v34h-1zM700 308h3v11h-3zM705 281h1v45h-1zM704 292h3v28h-3zM709 284h1v100h-1zM708 292h3v59h-3zM713 280h1v88h-1zM712 284h3v67h-3zM717 285h1v79h-1zM716 306h3v43h-3zM721 275h1v88h-1zM720 284h3v77h-3zM725 282h1v102h-1zM724 285h3v66h-3zM729 334h1v96h-1zM728 352h3v30h-3zM733 353h1v43h-1zM732 388h3v8h-3zM737 313h1v103h-1zM736 331h3v79h-3zM741 319h1v60h-1zM740 332h3v29h-3zM745 324h1v49h-1zM744 362h3v1h-3zM749 358h1v73h-1zM748 368h3v55h-3zM753 390h1v40h-1zM752 410h3v14h-3zM757 404h1v77h-1zM756 412h3v59h-3zM761 376h1v118h-1zM760 382h3v91h-3zM765 370h1v39h-1zM764 382h3v3h-3zM769 378h1v42h-1zM768 386h3v26h-3zM773 363h1v56h-1zM772 364h3v48h-3z" fill="#000"/><path d="M5 498h1v23h-1zM9 469h1v30h-1zM13 437h1v32h-1zM17 431h1v4h-1zM21 392h1v39h-1zM25 342h1v51h-1zM33 327h1v24h-1zM37 275h1v50h-1zM41 263h1v10h-1zM45 272h1v1h-1zM49 245h1v27h-1zM53 220h1v22h-1zM61 206h1v23h-1zM73 240h1v5h-1zM77 233h1v5h-1zM93 269h1v2h-1zM101 283h1v24h-1zM113 305h1v18h-1zM129 351h1v20h-1zM141 368h1v19h-1zM149 377h1v40h-1zM153 375h1v14h-1zM157 364h1v9h-1zM165 272h1v101h-1zM169 264h1v17h-1zM181 278h1v9h-1zM197 326h1v29h-1zM201 271h1v53h-1zM205 267h1v2h-1zM213 302h1v18h-1zM225 307h1v2h-1zM233 322h1v15h-1zM237 317h1v4h-1zM241 280h1v35h-1zM245 224h1v55h-1zM257 243h1v29h-1zM277 303h1v22h-1zM285 297h1v18h-1zM289 291h1v4h-1zM297 335h1v14h-1zM301 315h1v18h-1zM305 292h1v21h-1zM313 274h1v31h-1zM325 301h1v2h-1zM329 285h1v16h-1zM337 295h1v6h-1zM345 273h1v27h-1zM365 370h1v23h-1zM389 520h1v2h-1zM397 472h1v45h-1zM409 516h1v37h-1zM413 466h1v56h-1zM429 534h1v15h-1zM437 559h1v15h-1zM441 535h1v22h-1zM453 561h1v46h-1zM457 555h1v15h-1zM461 548h1v6h-1zM465 447h1v99h-1zM469 405h1v40h-1zM473 389h1v26h-1zM481 312h1v74h-1zM489 315h1v2h-1zM509 319h1v21h-1zM517 326h1v31h-1zM521 286h1v39h-1zM525 283h1v2h-1zM529 279h1v2h-1zM533 283h1v8h-1zM541 263h1v27h-1zM553 272h1v4h-1zM557 228h1v42h-1zM561 198h1v27h-1zM565 176h1v19h-1zM573 213h1v8h-1zM577 205h1v13h-1zM589 194h1v55h-1zM597 147h1v50h-1zM621 290h1v10h-1zM633 274h1v19h-1zM637 266h1v8h-1zM641 262h1v7h-1zM649 287h1v14h-1zM653 255h1v32h-1zM661 269h1v11h-1zM665 266h1v3h-1zM681 305h1v23h-1zM685 303h1v1h-1zM689 299h1v2h-1zM693 260h1v36h-1zM705 293h1v26h-1zM713 285h1v65h-1zM721 285h1v75h-1zM733 389h1v6h-1zM737 332h1v77h-1zM753 411h1v12h-1zM761 383h1v89h-1zM773 365h1v46h-1z" fill="#fff"/><path d="M129 127.5H976" stroke="#14622a" stroke-width="1" stroke-dasharray="9 3 3 3 3 3" fill="none"/><path d="M129 250.5H976" stroke="#14622a" stroke-width="1" stroke-dasharray="9 3 3 3 3 3" fill="none"/><path d="M129 326.5H976" stroke="#14622a" stroke-width="1" stroke-dasharray="9 3 3 3 3 3" fill="none"/><path d="M129 387.5H976" stroke="#14622a" stroke-width="1" stroke-dasharray="9 3 3 3 3 3" fill="none"/><path d="M129 449.5H976" stroke="#14622a" stroke-width="1" stroke-dasharray="9 3 3 3 3 3" fill="none"/><path d="M129 648.5H976" stroke="#14622a" stroke-width="1" stroke-dasharray="9 3 3 3 3 3" fill="none"/><path d="M5 374.5H976" stroke="#228b22" stroke-width="1" stroke-dasharray="9 6 3 6" fill="none"/><path d="M5 481.5H976" stroke="#228b22" stroke-width="1" stroke-dasharray="9 6 3 6" fill="none"/><path d="M5 561.5H976" stroke="#228b22" stroke-width="1" stroke-dasharray="9 6 3 6" fill="none"/><path d="M5 589.5H976" stroke="#228b22" stroke-width="1" stroke-dasharray="9 6 3 6" fill="none"/><path d="M129 648h1v1h-1zM130 647h1v1h-1zM131 646h1v1h-1zM135 642h1v1h-1zM136 641h1v1h-1zM137 641h1v1h-1zM141 637h1v1h-1zM142 636h1v1h-1zM143 635h1v1h-1zM147 631h1v1h-1zM148 630h1v1h-1zM149 629h1v1h-1zM153 626h1v1h-1zM154 625h1v1h-1zM155 624h1v1h-1zM159 620h1v1h-1zM160 619h1v1h-1zM161 618h1v1h-1zM165 615h1v1h-1zM166 614h1v1h-1zM167 613h1v1h-1zM171 609h1v1h-1zM172 608h1v1h-1zM173 607h1v1h-1zM177 603h1v1h-1zM178 602h1v1h-1zM179 601h1v1h-1zM183 598h1v1h-1zM184 597h1v1h-1zM185 596h1v1h-1zM189 592h1v1h-1zM190 591h1v1h-1zM191 590h1v1h-1zM195 587h1v1h-1zM196 586h1v1h-1zM197 585h1v1h-1zM201 581h1v1h-1zM202 580h1v1h-1zM203 579h1v1h-1zM207 575h1v1h-1zM208 575h1v1h-1zM209 574h1v1h-1zM213 570h1v1h-1zM214 569h1v1h-1zM215 568h1v1h-1zM219 564h1v1h-1zM220 563h1v1h-1zM221 562h1v1h-1zM225 559h1v1h-1zM226 558h1v1h-1zM227 557h1v1h-1zM231 553h1v1h-1zM232 552h1v1h-1zM233 551h1v1h-1zM237 548h1v1h-1zM238 547h1v1h-1zM239 546h1v1h-1zM243 542h1v1h-1zM244 541h1v1h-1zM245 540h1v1h-1zM249 536h1v1h-1zM250 535h1v1h-1zM251 534h1v1h-1zM255 531h1v1h-1zM256 530h1v1h-1zM257 529h1v1h-1zM261 525h1v1h-1zM262 524h1v1h-1zM263 523h1v1h-1zM267 520h1v1h-1zM268 519h1v1h-1zM269 518h1v1h-1zM273 514h1v1h-1zM274 513h1v1h-1zM275 512h1v1h-1zM279 508h1v1h-1zM280 508h1v1h-1zM281 507h1v1h-1zM285 503h1v1h-1zM286 502h1v1h-1zM287 501h1v1h-1zM291 497h1v1h-1zM292 496h1v1h-1zM293 495h1v1h-1zM297 492h1v1h-1zM298 491h1v1h-1zM299 490h1v1h-1zM303 486h1v1h-1zM304 485h1v1h-1zM305 484h1v1h-1zM309 481h1v1h-1zM310 480h1v1h-1zM311 479h1v1h-1zM315 475h1v1h-1zM316 474h1v1h-1zM317 473h1v1h-1zM321 469h1v1h-1zM322 468h1v1h-1zM323 468h1v1h-1zM327 464h1v1h-1zM328 463h1v1h-1zM329 462h1v1h-1zM333 458h1v1h-1zM334 457h1v1h-1zM335 456h1v1h-1zM339 453h1v1h-1zM340 452h1v1h-1zM341 451h1v1h-1zM345 447h1v1h-1zM346 446h1v1h-1zM347 445h1v1h-1zM351 441h1v1h-1zM352 441h1v1h-1zM353 440h1v1h-1zM357 436h1v1h-1zM358 435h1v1h-1zM359 434h1v1h-1zM363 430h1v1h-1zM364 429h1v1h-1zM365 428h1v1h-1zM369 425h1v1h-1zM370 424h1v1h-1zM371 423h1v1h-1zM375 419h1v1h-1zM376 418h1v1h-1zM377 417h1v1h-1zM381 414h1v1h-1zM382 413h1v1h-1zM383 412h1v1h-1zM387 408h1v1h-1zM388 407h1v1h-1zM389 406h1v1h-1zM393 402h1v1h-1zM394 401h1v1h-1zM395 401h1v1h-1zM399 397h1v1h-1zM400 396h1v1h-1zM401 395h1v1h-1zM405 391h1v1h-1zM406 390h1v1h-1zM407 389h1v1h-1zM411 386h1v1h-1zM412 385h1v1h-1zM413 384h1v1h-1zM417 380h1v1h-1zM418 379h1v1h-1zM419 378h1v1h-1zM423 374h1v1h-1zM424 374h1v1h-1zM425 373h1v1h-1zM429 369h1v1h-1zM430 368h1v1h-1zM431 367h1v1h-1zM435 363h1v1h-1zM436 362h1v1h-1zM437 361h1v1h-1zM441 358h1v1h-1zM442 357h1v1h-1zM443 356h1v1h-1zM447 352h1v1h-1zM448 351h1v1h-1zM449 350h1v1h-1zM453 347h1v1h-1zM454 346h1v1h-1zM455 345h1v1h-1zM459 341h1v1h-1zM460 340h1v1h-1zM461 339h1v1h-1zM465 335h1v1h-1zM466 334h1v1h-1zM467 334h1v1h-1zM471 330h1v1h-1zM472 329h1v1h-1zM473 328h1v1h-1zM477 324h1v1h-1zM478 323h1v1h-1zM479 322h1v1h-1zM483 319h1v1h-1zM484 318h1v1h-1zM485 317h1v1h-1zM489 313h1v1h-1zM490 312h1v1h-1zM491 311h1v1h-1zM495 307h1v1h-1zM496 307h1v1h-1zM497 306h1v1h-1zM501 302h1v1h-1zM502 301h1v1h-1zM503 300h1v1h-1zM507 296h1v1h-1zM508 295h1v1h-1zM509 294h1v1h-1zM513 291h1v1h-1zM514 290h1v1h-1zM515 289h1v1h-1zM519 285h1v1h-1zM520 284h1v1h-1zM521 283h1v1h-1zM525 280h1v1h-1zM526 279h1v1h-1zM527 278h1v1h-1zM531 274h1v1h-1zM532 273h1v1h-1zM533 272h1v1h-1zM537 268h1v1h-1zM538 267h1v1h-1zM539 267h1v1h-1zM543 263h1v1h-1zM544 262h1v1h-1zM545 261h1v1h-1zM549 257h1v1h-1zM550 256h1v1h-1zM551 255h1v1h-1zM555 252h1v1h-1zM556 251h1v1h-1zM557 250h1v1h-1zM561 246h1v1h-1zM562 245h1v1h-1zM563 244h1v1h-1zM567 241h1v1h-1zM568 240h1v1h-1zM569 239h1v1h-1zM573 235h1v1h-1zM574 234h1v1h-1zM575 233h1v1h-1zM579 229h1v1h-1zM580 228h1v1h-1zM581 227h1v1h-1zM585 224h1v1h-1zM586 223h1v1h-1zM587 222h1v1h-1zM591 218h1v1h-1zM592 217h1v1h-1zM593 216h1v1h-1zM597 213h1v1h-1zM598 212h1v1h-1zM599 211h1v1h-1zM603 207h1v1h-1zM604 206h1v1h-1zM605 205h1v1h-1zM609 201h1v1h-1zM610 200h1v1h-1zM611 200h1v1h-1zM615 196h1v1h-1zM616 195h1v1h-1zM617 194h1v1h-1zM621 190h1v1h-1zM622 189h1v1h-1zM623 188h1v1h-1zM627 185h1v1h-1zM628 184h1v1h-1zM629 183h1v1h-1zM633 179h1v1h-1zM634 178h1v1h-1zM635 177h1v1h-1zM639 174h1v1h-1zM640 173h1v1h-1zM641 172h1v1h-1zM645 168h1v1h-1zM646 167h1v1h-1zM647 166h1v1h-1zM651 162h1v1h-1zM652 161h1v1h-1zM653 160h1v1h-1zM657 157h1v1h-1zM658 156h1v1h-1zM659 155h1v1h-1zM663 151h1v1h-1zM664 150h1v1h-1zM665 149h1v1h-1zM669 146h1v1h-1zM670 145h1v1h-1zM671 144h1v1h-1zM675 140h1v1h-1zM676 139h1v1h-1zM677 138h1v1h-1zM681 134h1v1h-1zM682 134h1v1h-1zM683 133h1v1h-1zM687 129h1v1h-1zM688 128h1v1h-1zM689 127h1v1h-1z" fill="#000"/><rect x="5" y="396" width="971" height="5" fill="#fc0404"/><rect x="5" y="396" width="971" height="1" fill="#e21414"/><rect x="5" y="400" width="971" height="1" fill="#d81a1a"/><rect x="5" y="401" width="971" height="1" fill="#a87884"/></g><path d="M4.500 101.500H976.500V662.500H4.500Z" fill="none" stroke="#000" stroke-width="1"/><path d="M775.500 102H785l-4.750 5z" fill="#d4d8dc" shape-rendering="geometricPrecision"/><g shape-rendering="geometricPrecision" stroke-width="0.150"><rect x="977" y="131" width="3" height="1" fill="#000" shape-rendering="crispEdges"/><text x="982" y="134.5" font-size="9.5" fill="#000409" stroke="#000409" text-anchor="start" textLength="32" lengthAdjust="spacingAndGlyphs">1.01250</text><rect x="977" y="164" width="3" height="1" fill="#000" shape-rendering="crispEdges"/><text x="982" y="167.5" font-size="9.5" fill="#000409" stroke="#000409" text-anchor="start" textLength="32" lengthAdjust="spacingAndGlyphs">1.00880</text><rect x="977" y="197" width="3" height="1" fill="#000" shape-rendering="crispEdges"/><text x="982" y="200.5" font-size="9.5" fill="#000409" stroke="#000409" text-anchor="start" textLength="32" lengthAdjust="spacingAndGlyphs">1.00500</text><rect x="977" y="230" width="3" height="1" fill="#000" shape-rendering="crispEdges"/><text x="982" y="233.5" font-size="9.5" fill="#000409" stroke="#000409" text-anchor="start" textLength="32" lengthAdjust="spacingAndGlyphs">1.00130</text><rect x="977" y="263" width="3" height="1" fill="#000" shape-rendering="crispEdges"/><text x="982" y="266.5" font-size="9.5" fill="#000409" stroke="#000409" text-anchor="start" textLength="32" lengthAdjust="spacingAndGlyphs">0.99760</text><rect x="977" y="296" width="3" height="1" fill="#000" shape-rendering="crispEdges"/><text x="982" y="299.5" font-size="9.5" fill="#000409" stroke="#000409" text-anchor="start" textLength="32" lengthAdjust="spacingAndGlyphs">0.99390</text><rect x="977" y="329" width="3" height="1" fill="#000" shape-rendering="crispEdges"/><text x="982" y="332.5" font-size="9.5" fill="#000409" stroke="#000409" text-anchor="start" textLength="32" lengthAdjust="spacingAndGlyphs">0.99010</text><rect x="977" y="395" width="3" height="1" fill="#000" shape-rendering="crispEdges"/><text x="982" y="398.5" font-size="9.5" fill="#000409" stroke="#000409" text-anchor="start" textLength="32" lengthAdjust="spacingAndGlyphs">0.98270</text><rect x="977" y="428" width="3" height="1" fill="#000" shape-rendering="crispEdges"/><text x="982" y="431.5" font-size="9.5" fill="#000409" stroke="#000409" text-anchor="start" textLength="32" lengthAdjust="spacingAndGlyphs">0.97900</text><rect x="977" y="461" width="3" height="1" fill="#000" shape-rendering="crispEdges"/><text x="982" y="464.5" font-size="9.5" fill="#000409" stroke="#000409" text-anchor="start" textLength="32" lengthAdjust="spacingAndGlyphs">0.97520</text><rect x="977" y="494" width="3" height="1" fill="#000" shape-rendering="crispEdges"/><text x="982" y="497.5" font-size="9.5" fill="#000409" stroke="#000409" text-anchor="start" textLength="32" lengthAdjust="spacingAndGlyphs">0.97150</text><rect x="977" y="527" width="3" height="1" fill="#000" shape-rendering="crispEdges"/><text x="982" y="530.5" font-size="9.5" fill="#000409" stroke="#000409" text-anchor="start" textLength="32" lengthAdjust="spacingAndGlyphs">0.96780</text><rect x="977" y="560" width="3" height="1" fill="#000" shape-rendering="crispEdges"/><text x="982" y="563.5" font-size="9.5" fill="#000409" stroke="#000409" text-anchor="start" textLength="32" lengthAdjust="spacingAndGlyphs">0.96410</text><rect x="977" y="593" width="3" height="1" fill="#000" shape-rendering="crispEdges"/><text x="982" y="596.5" font-size="9.5" fill="#000409" stroke="#000409" text-anchor="start" textLength="32" lengthAdjust="spacingAndGlyphs">0.96030</text><rect x="977" y="626" width="3" height="1" fill="#000" shape-rendering="crispEdges"/><text x="982" y="629.5" font-size="9.5" fill="#000409" stroke="#000409" text-anchor="start" textLength="32" lengthAdjust="spacingAndGlyphs">0.95660</text><rect x="977" y="659" width="3" height="1" fill="#000" shape-rendering="crispEdges"/><text x="982" y="662.5" font-size="9.5" fill="#000409" stroke="#000409" text-anchor="start" textLength="32" lengthAdjust="spacingAndGlyphs">0.95290</text><rect x="978" y="359" width="42" height="11" fill="#000" shape-rendering="crispEdges"/><text x="982" y="368" font-size="9.5" fill="#fff" stroke="#fff" text-anchor="start" textLength="32" lengthAdjust="spacingAndGlyphs" stroke-width="0.100">0.98614</text><text x="975" y="125" font-size="9.5" fill="#16782a" stroke="#16782a" text-anchor="end" textLength="13" lengthAdjust="spacingAndGlyphs">0.0</text><text x="975" y="195" font-size="9.5" fill="#06600c" stroke="#06600c" text-anchor="end" textLength="17.5" lengthAdjust="spacingAndGlyphs">23.6</text><text x="975" y="248" font-size="9.5" fill="#16782a" stroke="#16782a" text-anchor="end" textLength="17.5" lengthAdjust="spacingAndGlyphs">23.6</text><text x="975" y="324" font-size="9.5" fill="#16782a" stroke="#16782a" text-anchor="end" textLength="17.5" lengthAdjust="spacingAndGlyphs">38.2</text><text x="975" y="360" font-size="9.5" fill="#06600c" stroke="#06600c" text-anchor="end" textLength="17.5" lengthAdjust="spacingAndGlyphs">38.2</text><text x="975" y="385" font-size="9.5" fill="#16782a" stroke="#16782a" text-anchor="end" textLength="17.5" lengthAdjust="spacingAndGlyphs">50.0</text><text x="975" y="395.5" font-size="9.5" fill="#e8303a" stroke="#e8303a" text-anchor="end" textLength="17.5" lengthAdjust="spacingAndGlyphs">38.2</text><text x="975" y="447" font-size="9.5" fill="#16782a" stroke="#16782a" text-anchor="end" textLength="17.5" lengthAdjust="spacingAndGlyphs">61.8</text><text x="975" y="494" font-size="9.5" fill="#06600c" stroke="#06600c" text-anchor="end" textLength="17.5" lengthAdjust="spacingAndGlyphs">50.0</text><text x="975" y="627" font-size="9.5" fill="#06600c" stroke="#06600c" text-anchor="end" textLength="17.5" lengthAdjust="spacingAndGlyphs">61.8</text><text x="975" y="646" font-size="9.5" fill="#16782a" stroke="#16782a" text-anchor="end" textLength="22.7" lengthAdjust="spacingAndGlyphs">100.0</text><path d="M8 108h7.500l-3.750 4.300z" fill="#000"/><text x="20.7" y="113" font-size="9.5" fill="#000409" stroke="#000409" text-anchor="start" textLength="86.3" lengthAdjust="spacingAndGlyphs">USDCHFmicro,Daily</text><text x="113.3" y="113" font-size="9.5" fill="#000409" stroke="#000409" text-anchor="start" textLength="140.7" lengthAdjust="spacingAndGlyphs">0.98075 0.98656 0.98012 0.98614</text><rect x="5" y="663" width="1" height="3" fill="#000" shape-rendering="crispEdges"/><text x="4.5" y="674.4" font-size="9.5" fill="#000409" stroke="#000409" text-anchor="start" textLength="50" lengthAdjust="spacingAndGlyphs">19 Apr 2018</text><rect x="69" y="663" width="1" height="3" fill="#000" shape-rendering="crispEdges"/><text x="68.5" y="674.4" font-size="9.5" fill="#000409" stroke="#000409" text-anchor="start" textLength="53.75" lengthAdjust="spacingAndGlyphs">11 May 2018</text><rect x="133" y="663" width="1" height="3" fill="#000" shape-rendering="crispEdges"/><text x="132.5" y="674.4" font-size="9.5" fill="#000409" stroke="#000409" text-anchor="start" textLength="44.5" lengthAdjust="spacingAndGlyphs">4 Jun 2018</text><rect x="197" y="663" width="1" height="3" fill="#000" shape-rendering="crispEdges"/><text x="196.5" y="674.4" font-size="9.5" fill="#000409" stroke="#000409" text-anchor="start" textLength="49" lengthAdjust="spacingAndGlyphs">26 Jun 2018</text><rect x="261" y="663" width="1" height="3" fill="#000" shape-rendering="crispEdges"/><text x="260.5" y="674.4" font-size="9.5" fill="#000409" stroke="#000409" text-anchor="start" textLength="46.25" lengthAdjust="spacingAndGlyphs">18 Jul 2018</text><rect x="325" y="663" width="1" height="3" fill="#000" shape-rendering="crispEdges"/><text x="324.5" y="674.4" font-size="9.5" fill="#000409" stroke="#000409" text-anchor="start" textLength="47" lengthAdjust="spacingAndGlyphs">9 Aug 2018</text><rect x="389" y="663" width="1" height="3" fill="#000" shape-rendering="crispEdges"/><text x="388.5" y="674.4" font-size="9.5" fill="#000409" stroke="#000409" text-anchor="start" textLength="52" lengthAdjust="spacingAndGlyphs">31 Aug 2018</text><rect x="453" y="663" width="1" height="3" fill="#000" shape-rendering="crispEdges"/><text x="452.5" y="674.4" font-size="9.5" fill="#000409" stroke="#000409" text-anchor="start" textLength="50.75" lengthAdjust="spacingAndGlyphs">24 Sep 2018</text><rect x="517" y="663" width="1" height="3" fill="#000" shape-rendering="crispEdges"/><text x="516.5" y="674.4" font-size="9.5" fill="#000409" stroke="#000409" text-anchor="start" textLength="50" lengthAdjust="spacingAndGlyphs">16 Oct 2018</text><rect x="581" y="663" width="1" height="3" fill="#000" shape-rendering="crispEdges"/><text x="580.5" y="674.4" font-size="9.5" fill="#000409" stroke="#000409" text-anchor="start" textLength="48.4" lengthAdjust="spacingAndGlyphs">6 Nov 2018</text><rect x="645" y="663" width="1" height="3" fill="#000" shape-rendering="crispEdges"/><text x="644.5" y="674.4" font-size="9.5" fill="#000409" stroke="#000409" text-anchor="start" textLength="53" lengthAdjust="spacingAndGlyphs">28 Nov 2018</text><rect x="709" y="663" width="1" height="3" fill="#000" shape-rendering="crispEdges"/><text x="708.5" y="674.4" font-size="9.5" fill="#000409" stroke="#000409" text-anchor="start" textLength="51" lengthAdjust="spacingAndGlyphs">20 Dec 2018</text><rect x="773" y="663" width="1" height="3" fill="#000" shape-rendering="crispEdges"/><text x="772.5" y="674.4" font-size="9.5" fill="#000409" stroke="#000409" text-anchor="start" textLength="48.4" lengthAdjust="spacingAndGlyphs">15 Jan 2019</text></g></svg></div><div id="tabs"></div><div class="abs" style="left:0;top:683px;width:1024px;height:2px;background:#fff"></div><div class="abs" style="left:0;top:685px;width:1024px;height:1px;background:#000"></div><div class="abs" style="left:0;top:686px;width:1px;height:18px;background:#8a8a8a"></div><span class="t" style="left:17.5px;top:684.7px;font-size:12px;color:#6d6d6d;letter-spacing:-0.273px;">GBPAUDmicro,Daily</span><span class="t" style="left:145.5px;top:684.7px;font-size:12px;color:#6d6d6d;letter-spacing:-0.286px;">GBPNZDmicro,Daily</span><span class="t" style="left:273.8px;top:684.7px;font-size:12px;color:#6d6d6d;letter-spacing:-0.284px;">GBPCADmicro,Daily</span><span class="t" style="left:402.5px;top:684.7px;font-size:12px;color:#6d6d6d;letter-spacing:-0.189px;">USDCNHmicro,Daily</span><div class="abs" style="left:134px;top:689px;width:1px;height:13px;background:#6d6d6d"></div><div class="abs" style="left:262px;top:689px;width:1px;height:13px;background:#6d6d6d"></div><div class="abs" style="left:390px;top:689px;width:1px;height:13px;background:#6d6d6d"></div><div class="abs" style="left:778px;top:689px;width:1px;height:13px;background:#6d6d6d"></div><div class="abs" style="left:906px;top:689px;width:1px;height:13px;background:#6d6d6d"></div><div class="abs" style="left:522px;top:683px;width:128px;height:21px;background:#fff;border:1px solid #000;border-top:none;box-sizing:border-box"></div><span class="t" style="left:533.5px;top:684.7px;font-size:12px;color:#000;letter-spacing:-0.299px;">USDCHFmicro,Daily</span><span class="t" style="left:661.8px;top:684.7px;font-size:12px;color:#6d6d6d;letter-spacing:-0.267px;">USDCADmicro,Daily</span><span class="t" style="left:789.4px;top:684.7px;font-size:12px;color:#6d6d6d;letter-spacing:-0.262px;">USDHKDmicro,Daily</span><div class="abs" style="left:916px;top:685px;width:70.500px;height:19px;overflow:hidden"><span class="t" style="left:0px;top:-0.3000000000000007px;font-size:12px;color:#6d6d6d;letter-spacing:-0.297px;">EURUSDmicro,Daily</span></div><svg style="left:990px;top:689px" width="28" height="12" viewBox="0 0 28 12" ><path d="M5.500 2.500v6l-3.700-3zM20.700 2.500v6l3.700-3z" fill="#000"/></svg><div id="status"></div><div class="abs" style="left:0;top:704px;width:1024px;height:1px;background:#fbfbfb"></div><span class="t" style="left:2.5px;top:708px;font-size:12px;color:#000;letter-spacing:-0.436px;">For Help, press F1</span><div class="abs" style="left:330px;top:709px;width:1px;height:17px;background:#b4b4b4"></div><div class="abs" style="left:446px;top:709px;width:1px;height:17px;background:#b4b4b4"></div><div class="abs" style="left:548px;top:709px;width:1px;height:17px;background:#b4b4b4"></div><div class="abs" style="left:619px;top:709px;width:1px;height:17px;background:#b4b4b4"></div><div class="abs" style="left:690px;top:709px;width:1px;height:17px;background:#b4b4b4"></div><div class="abs" style="left:759px;top:709px;width:1px;height:17px;background:#b4b4b4"></div><div class="abs" style="left:828px;top:709px;width:1px;height:17px;background:#b4b4b4"></div><div class="abs" style="left:894px;top:709px;width:1px;height:17px;background:#b4b4b4"></div><span class="t" style="left:336px;top:708px;font-size:12px;color:#000;letter-spacing:-0.254px;">Legy</span><span class="t" style="left:452px;top:708px;font-size:12px;color:#000;letter-spacing:-0.562px;">2018.11.05 00:00</span><span class="t" style="left:554.8px;top:708px;font-size:12px;color:#000;letter-spacing:-0.714px;">O: 1.00253</span><span class="t" style="left:626px;top:708px;font-size:12px;color:#000;letter-spacing:-0.569px;">H: 1.00680</span><span class="t" style="left:697px;top:708px;font-size:12px;color:#000;letter-spacing:-0.519px;">L: 1.00169</span><span class="t" style="left:764.6px;top:708px;font-size:12px;color:#000;letter-spacing:-0.629px;">C: 1.00426</span><span class="t" style="left:834px;top:708px;font-size:12px;color:#000;letter-spacing:-0.647px;">V: 61573</span><svg style="left:900px;top:711px" width="24" height="13" viewBox="0 0 24 13" shape-rendering="crispEdges"><rect x="0" y="0" width="2" height="9" fill="#6f8f1c"/><rect x="0" y="10" width="2" height="3" fill="#0d4a6e"/><rect x="3" y="0" width="2" height="8" fill="#6f8f1c"/><rect x="3" y="9" width="2" height="4" fill="#0d4a6e"/><rect x="6" y="0" width="2" height="7" fill="#6f8f1c"/><rect x="6" y="8" width="2" height="5" fill="#0d4a6e"/><rect x="9" y="0" width="2" height="6" fill="#6f8f1c"/><rect x="9" y="7" width="2" height="6" fill="#0d4a6e"/><rect x="12" y="0" width="2" height="5" fill="#6f8f1c"/><rect x="12" y="6" width="2" height="7" fill="#0d4a6e"/><rect x="15" y="0" width="2" height="4" fill="#6f8f1c"/><rect x="15" y="5" width="2" height="8" fill="#0d4a6e"/><rect x="18" y="0" width="2" height="3" fill="#6f8f1c"/><rect x="18" y="4" width="2" height="9" fill="#0d4a6e"/><rect x="21" y="0" width="2" height="2" fill="#6f8f1c"/><rect x="21" y="3" width="2" height="10" fill="#0d4a6e"/></svg><span class="t" style="left:927px;top:708px;font-size:12px;color:#000;letter-spacing:-0.252px;">443/1 kb</span><div id="taskbar"></div><div class="abs" style="left:245px;top:728px;width:48px;height:40px;background:#2f3236"></div><div class="abs" style="left:245px;top:766px;width:48px;height:2px;background:#76b9ed"></div><div class="abs" style="left:298px;top:766px;width:40px;height:2px;background:#76b9ed"></div><svg style="left:15px;top:739px" width="18" height="18" viewBox="0 0 18 18" ><path d="M1 3.200l6.800-1v6.300H1zM8.600 2.100L17.300 0.800v7.700H8.600zM1 9.300h6.800v6.300L1 14.600zM8.600 9.300h8.700v7.700l-8.700-1.300z" fill="#fff"/></svg><svg style="left:63px;top:739px" width="18" height="18" viewBox="0 0 18 18" ><circle cx="11.400" cy="6.500" r="5.100" fill="none" stroke="#fff" stroke-width="1.300"/><path d="M7.800 10.200L1.200 16.800" stroke="#fff" stroke-width="1.300"/></svg><svg style="left:111px;top:739px" width="18" height="17" viewBox="0 0 18 17" ><path d="M1.500 3v-1.500h9.500v1.500M1.500 14v1.500h9.500v-1.500" stroke="#fff" fill="none" stroke-width="1.300"/><rect x="1.600" y="5.600" width="10" height="6" fill="none" stroke="#fff" stroke-width="1.300"/><path d="M15.300 1v15" stroke="#fff" stroke-width="1.300"/><rect x="13.500" y="5" width="3.400" height="3.200" fill="#fff"/></svg><svg style="left:160px;top:737px" width="22" height="22" viewBox="0 0 22 22" ><path d="M1.500 10.500C2 5 6 1 11.500 1c5.500 0 9 4 9 9.500v2.500H8c.3 3 2.600 4.500 5.500 4.500 2.300 0 4.300-.7 6-1.800v4.300c-1.800 1-4.200 1.700-7 1.700-5.600 0-9.300-3.600-9.300-9 0-3 1.500-5.600 3.800-7.200C4 6.500 2.300 8.300 1.500 10.500zM8 9h7.500c0-2.400-1.400-4-3.600-4C9.700 5 8.300 6.600 8 9z" fill="#1c84dc"/></svg><svg style="left:209px;top:739px" width="23" height="19" viewBox="0 0 23 19" ><path d="M0.500 1.500h7l1.500 2h13.500v14H0.500z" fill="#f6d27a"/><path d="M0.500 5.500h22v12h-22z" fill="#fbe3a0"/><path d="M4.500 17.500v-6.500h14v6.500h-4v-3.500h-6v3.500z" fill="#3ba5e6"/><path d="M4.500 11l2-1.500h10l2 1.500z" fill="#5bc0f5"/></svg><svg style="left:257px;top:736px" width="24" height="23" viewBox="0 0 24 23" ><rect x="0" y="0" width="24" height="23" rx="3.500" fill="#0a0a0a"/><path d="M3.500 15.500L7 7.500" stroke="#e02020" stroke-width="1.800"/><text x="6.200" y="15.600" font-size="10.500" font-weight="bold" font-style="italic" fill="#fff" textLength="15.500" lengthAdjust="spacingAndGlyphs">XM</text></svg><svg style="left:306px;top:737px" width="23" height="23" viewBox="0 0 23 23" ><circle cx="11.500" cy="11.500" r="11" fill="#e0e0e0"/><path d="M11.500 11.500L1.970 6A11 11 0 0 1 21.030 6z" fill="#db4437"/><path d="M11.500 11.500L21.030 6A11 11 0 0 1 11.500 22.500z" fill="#f4c20d"/><path d="M11.500 11.500L11.500 22.500A11 11 0 0 1 1.970 6z" fill="#0f9d58"/><circle cx="11.500" cy="11.500" r="5.200" fill="#fff"/><circle cx="11.500" cy="11.500" r="4.100" fill="#4285f4"/></svg><svg style="left:777px;top:739px" width="18" height="17" viewBox="0 0 18 17" ><circle cx="11.200" cy="3.300" r="2.200" fill="none" stroke="#fff" stroke-width="1.100"/><path d="M7.900 9.700C7.900 7.500 9.300 6.500 11.200 6.500S14.800 7.500 14.800 9.700" fill="none" stroke="#fff" stroke-width="1.100"/><circle cx="5" cy="9.700" r="2.200" fill="none" stroke="#fff" stroke-width="1.100"/><path d="M1.300 15.800C1.300 13.600 2.800 12.700 5 12.700S8.700 13.600 8.700 15.800" fill="none" stroke="#fff" stroke-width="1.100"/></svg><svg style="left:814px;top:744px" width="14" height="9" viewBox="0 0 14 9" ><path d="M1 7.500L7 1.500l6 6" fill="none" stroke="#fff" stroke-width="1.300"/></svg><svg style="left:836px;top:741px" width="19" height="14" viewBox="0 0 19 14" ><rect x="5.500" y="3.500" width="11" height="7" fill="none" stroke="#fff" stroke-width="1.100"/><rect x="17" y="5.500" width="1.500" height="3" fill="#fff"/><rect x="7" y="5" width="8" height="4" fill="#fff"/><path d="M3 0.500v3M5.500 0.500v3M1.500 3.500h5.500v2.500c0 1.500-1.200 2.300-2.700 2.300S1.500 7.500 1.500 6zM4.200 8.300v3.500" stroke="#fff" fill="#0d1015" stroke-width="1.100"/></svg><svg style="left:863px;top:741px" width="16" height="15" viewBox="0 0 16 15" ><path d="M1 9A12 12 0 0 1 13 1.500" fill="none" stroke="#fff" stroke-width="1.200"/><path d="M4 11.500A9 9 0 0 1 13.500 5" fill="none" stroke="#bbb" stroke-width="1.200"/><path d="M7.500 13A5.500 5.500 0 0 1 13.500 8.500" fill="none" stroke="#bbb" stroke-width="1.200"/><circle cx="12.500" cy="12.800" r="1.500" fill="#fff"/></svg><svg style="left:884px;top:741px" width="17" height="14" viewBox="0 0 17 14" ><path d="M1 5h2.500l3.500-3.500v11L3.500 9H1z" fill="none" stroke="#fff" stroke-width="1.100"/><path d="M10 4.500l5 5M15 4.500l-5 5" stroke="#fff" stroke-width="1.100"/></svg><span class="t" style="left:925px;top:729px;font-size:12px;color:#fff;letter-spacing:-1.003px;">12:21</span><span class="t" style="left:911.4px;top:746.5px;font-size:12px;color:#fff;letter-spacing:-0.683px;">15.01.2019</span><svg style="left:983px;top:740px" width="25" height="24" viewBox="0 0 25 24" ><path d="M1.500 1.500h15v11h-9l-3 3v-3h-3z" fill="#fff"/><path d="M4 4.500h10M4 7h10M4 9.500h6" stroke="#0d1015" stroke-width="1"/><circle cx="17" cy="16" r="6.500" fill="#3a3d42" stroke="#8b8e93" stroke-width="1.200"/><text x="16.800" y="19.200" font-size="9" fill="#fff" stroke="#fff" stroke-width="0.300" text-anchor="middle">1</text></svg><div class="abs" style="left:1018px;top:728px;width:1px;height:40px;background:#4a4d52"></div></body></html>
